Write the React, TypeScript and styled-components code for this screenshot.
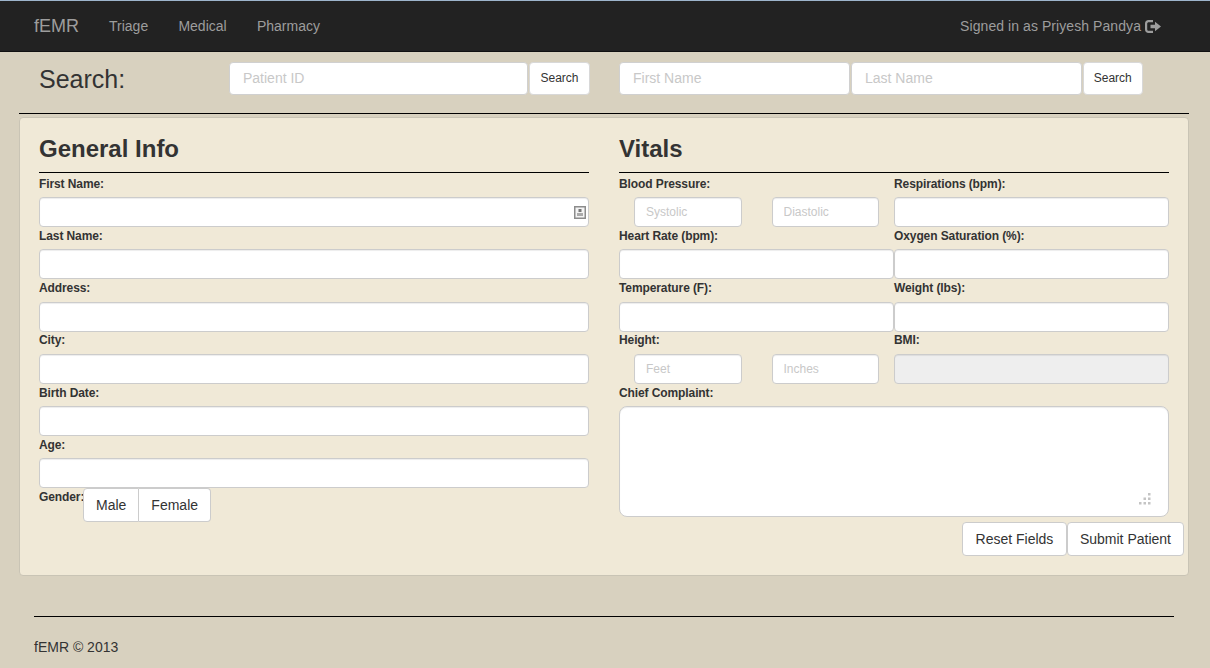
import { createGlobalStyle, styled } from "styled-components";

const GlobalStyle = createGlobalStyle`
  html, body {
    margin: 0;
    padding: 0;
    background: #d8d1bf;
    font-family: "Liberation Sans", Arial, sans-serif;
    font-size: 14px;
    color: #333;
  }
  * {
    box-sizing: border-box;
  }
`;

const Navbar = styled.nav`
  height: 52px;
  background: #222;
  border-top: 1px solid #9db4cc;
  border-bottom: 1px solid #111;
  display: flex;
  align-items: center;
  padding: 0 49px 0 34px;
  color: #9d9d9d;
`;

const Brand = styled.span`
  font-size: 18px;
  margin-right: 30px;
`;

const NavLink = styled.span`
  margin-right: 30.25px;
`;

const SignedIn = styled.span`
  margin-left: auto;
  display: flex;
  align-items: center;
  gap: 4px;
  letter-spacing: 0.07px;
`;

const SearchBar = styled.div`
  height: 61px;
  padding: 10px 0 0 39px;
  display: flex;
  align-items: flex-start;
`;

const SearchTitle = styled.div`
  width: 190px;
  font-size: 25px;
  line-height: 34px;
`;

const SearchGroup = styled.div<{ $width: number; $offset?: number }>`
  width: ${(p) => p.$width}px;
  margin-left: ${(p) => p.$offset ?? 0}px;
  display: flex;
  gap: 1px;
`;

const SearchInput = styled.input`
  flex: 1;
  min-width: 0;
  height: 32.5px;
  padding: 0 13px;
  background: #fff;
  border: 1px solid #d0d0d0;
  border-radius: 4px;
  font: 14px "Liberation Sans", Arial, sans-serif;
  &::placeholder {
    color: #c8c8c8;
    opacity: 1;
  }
`;

const SearchButton = styled.button<{ $width: number }>`
  width: ${(p) => p.$width}px;
  height: 32.5px;
  padding: 0;
  background: #fff;
  border: 1px solid #d8d8d8;
  border-radius: 4px;
  font: 12px "Liberation Sans", Arial, sans-serif;
  color: #333;
`;

const Rule = styled.hr`
  height: 1px;
  margin: 0 21px 0 19px;
  border: 0;
  background: #000;
`;

const Panel = styled.main`
  margin: 3px 21px 0 19px;
  height: 459px;
  background: #f0e9d7;
  border: 1px solid #c9c4b5;
  border-radius: 4px;
  padding: 14px 19px 0;
`;

const Columns = styled.div`
  display: grid;
  grid-template-columns: 550px 550px;
  column-gap: 30px;
`;

const Heading = styled.h2`
  margin: 0 0 1.75px;
  height: 41px;
  font-size: 24px;
  line-height: 34px;
  font-weight: 700;
  color: #333;
  border-bottom: 1px solid #000;
`;

const Label = styled.label`
  display: block;
  height: 22.25px;
  padding-top: 1.9px;
  font-size: 12px;
  line-height: 14px;
  font-weight: 700;
  letter-spacing: -0.1px;
  color: #333;
`;

const Input = styled.input`
  display: block;
  width: 100%;
  height: 30px;
  padding: 0 11px;
  background: ${(p) => (p.disabled ? "#eee" : "#fff")};
  border: 1px solid #ccc;
  border-radius: 4px;
  box-shadow: inset 0 1px 1px rgba(0, 0, 0, 0.075);
  font: 12px "Liberation Sans", Arial, sans-serif;
  &::placeholder {
    color: #c8c8c8;
    opacity: 1;
  }
`;

const InputWrap = styled.div`
  position: relative;
`;

const AutofillIcon = styled.svg`
  position: absolute;
  top: 9px;
  right: 3px;
`;

const VitalsGrid = styled.div`
  display: grid;
  grid-template-columns: 1fr 1fr;
`;

const PairedInputs = styled.div`
  display: grid;
  grid-template-columns: 1fr 1fr;
  column-gap: 30px;
  padding: 0 15px;
`;

const Complaint = styled.div`
  position: relative;
  height: 111px;
`;

const ComplaintBox = styled.textarea`
  display: block;
  width: 100%;
  height: 100%;
  resize: none;
  background: #fff;
  border: 1px solid #ccc;
  border-radius: 8px;
  box-shadow: inset 0 1px 1px rgba(0, 0, 0, 0.075);
`;

const ResizeGrip = styled.svg`
  position: absolute;
  right: 18px;
  bottom: 12px;
`;

const GenderRow = styled.div`
  display: flex;
  align-items: flex-start;
`;

const GenderLabel = styled(Label)`
  width: 44px;
  height: 34px;
`;

const ToggleGroup = styled.div`
  display: flex;
`;

const Toggle = styled.button<{ $side: "left" | "right" }>`
  height: 34px;
  padding: 0 12px;
  background: #fff;
  border: 1px solid #ccc;
  border-left-width: ${(p) => (p.$side === "left" ? "1px" : "0")};
  border-radius: ${(p) => (p.$side === "left" ? "4px 0 0 4px" : "0 4px 4px 0")};
  font: 14px "Liberation Sans", Arial, sans-serif;
  color: #333;
`;

const Actions = styled.div`
  display: flex;
  justify-content: flex-end;
  margin: 5px -15px 0 0;
`;

const ActionButton = styled.button`
  min-width: 105px;
  height: 34px;
  padding: 0 12px;
  background: #fff;
  border: 1px solid #ccc;
  border-radius: 4px;
  font: 14px "Liberation Sans", Arial, sans-serif;
  color: #333;
`;

const Footer = styled.footer`
  margin: 40px 36px 0 34px;
  border-top: 1px solid #000;
  padding-top: 20px;
  line-height: 20px;
`;

const LogOutIcon = () => (
  <svg width="16" height="13" viewBox="0 0 16 13" fill="#9d9d9d">
    <path d="M3.5 0H8v2.2H3.8C2.8 2.2 2.2 2.8 2.2 3.8v5.4c0 1 .6 1.6 1.6 1.6H8V13H3.5C1.5 13 0 11.5 0 9.5v-6C0 1.5 1.5 0 3.5 0z" />
    <path d="M5.5 4.7H10V1.8l6 4.7-6 4.7V8.3H5.5z" />
  </svg>
);

const generalFields = ["Last Name:", "Address:", "City:", "Birth Date:", "Age:"];

const gripDots = [
  [9, 0],
  [4.5, 4.5],
  [9, 4.5],
  [0, 9],
  [4.5, 9],
  [9, 9],
];

const App = () => {
  return (
    <>
      <GlobalStyle />
      <Navbar>
        <Brand>fEMR</Brand>
        <NavLink>Triage</NavLink>
        <NavLink>Medical</NavLink>
        <NavLink>Pharmacy</NavLink>
        <SignedIn>
          Signed in as Priyesh Pandya <LogOutIcon />
        </SignedIn>
      </Navbar>
      <SearchBar>
        <SearchTitle>Search:</SearchTitle>
        <SearchGroup $width={361}>
          <SearchInput placeholder="Patient ID" />
          <SearchButton $width={61}>Search</SearchButton>
        </SearchGroup>
        <SearchGroup $width={523.5} $offset={29}>
          <SearchInput placeholder="First Name" />
          <SearchInput placeholder="Last Name" />
          <SearchButton $width={59.5}>Search</SearchButton>
        </SearchGroup>
      </SearchBar>
      <Rule />
      <Panel>
        <Columns>
          <section>
            <Heading>General Info</Heading>
            <Label>First Name:</Label>
            <InputWrap>
              <Input />
              <AutofillIcon width="12" height="13" viewBox="0 0 12 13">
                <rect x="0.75" y="0.75" width="10.5" height="11.5" fill="#f4f4f4" stroke="#8c8c8c" strokeWidth="1.5" />
                <rect x="4.5" y="3" width="3" height="3" fill="#777" />
                <rect x="3" y="7" width="6" height="3" fill="#aaa" />
              </AutofillIcon>
            </InputWrap>
            {generalFields.map((name) => (
              <div key={name}>
                <Label>{name}</Label>
                <Input />
              </div>
            ))}
            <GenderRow>
              <GenderLabel>Gender:</GenderLabel>
              <ToggleGroup>
                <Toggle $side="left">Male</Toggle>
                <Toggle $side="right">Female</Toggle>
              </ToggleGroup>
            </GenderRow>
          </section>
          <section>
            <Heading>Vitals</Heading>
            <VitalsGrid>
              <div>
                <Label>Blood Pressure:</Label>
                <PairedInputs>
                  <Input placeholder="Systolic" />
                  <Input placeholder="Diastolic" />
                </PairedInputs>
              </div>
              <div>
                <Label>Respirations (bpm):</Label>
                <Input />
              </div>
              <div>
                <Label>Heart Rate (bpm):</Label>
                <Input />
              </div>
              <div>
                <Label>Oxygen Saturation (%):</Label>
                <Input />
              </div>
              <div>
                <Label>Temperature (F):</Label>
                <Input />
              </div>
              <div>
                <Label>Weight (lbs):</Label>
                <Input />
              </div>
              <div>
                <Label>Height:</Label>
                <PairedInputs>
                  <Input placeholder="Feet" />
                  <Input placeholder="Inches" />
                </PairedInputs>
              </div>
              <div>
                <Label>BMI:</Label>
                <Input disabled />
              </div>
            </VitalsGrid>
            <Label>Chief Complaint:</Label>
            <Complaint>
              <ComplaintBox />
              <ResizeGrip width="12" height="12" viewBox="0 0 12 12" fill="#c4c4c4">
                {gripDots.map(([x, y]) => (
                  <rect key={`${x}-${y}`} x={x} y={y} width="2.5" height="2.5" />
                ))}
              </ResizeGrip>
            </Complaint>
            <Actions>
              <ActionButton>Reset Fields</ActionButton>
              <ActionButton>Submit Patient</ActionButton>
            </Actions>
          </section>
        </Columns>
      </Panel>
      <Footer>fEMR © 2013</Footer>
    </>
  );
};

export default App;
